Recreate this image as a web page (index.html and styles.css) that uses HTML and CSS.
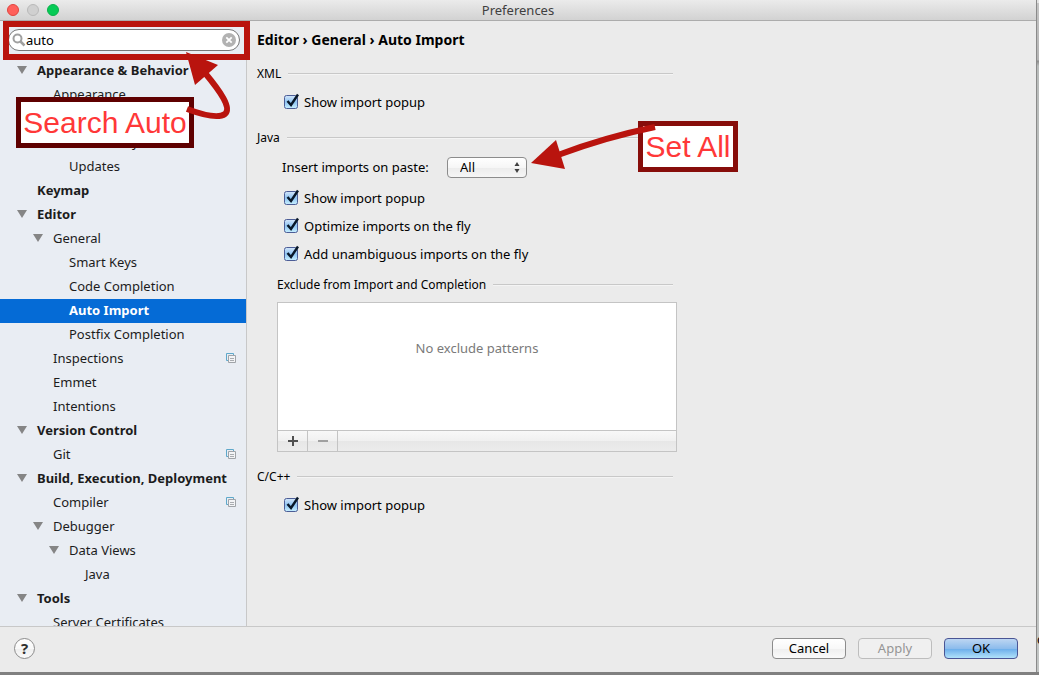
FILE: index.html
```html
<!DOCTYPE html>
<html lang="en">
<head>
  <meta charset="UTF-8" />
  <title>Preferences</title>
  <link rel="stylesheet" href="styles.css">
</head>
<body>
  <svg class="defs" width="0" height="0">
    <symbol id="copy" viewBox="0 0 10 10">
      <path d="M2.500 7.500h-2v-7h7v2" fill="none" stroke="#5fa8ca" />
      <path d="M2.500 2.500h7v7h-7z" fill="#f3f4f6" stroke="#a0a4a8" />
      <path d="M4 5.500h4M4 7.500h4" stroke="#a9acb0" />
    </symbol>
  </svg>

  <div class="window">
    <header class="titlebar">
      <div class="lights">
        <span class="light close"></span>
        <span class="light minimize"></span>
        <span class="light zoom"></span>
      </div>
      <h1>Preferences</h1>
    </header>

    <div class="main">
      <nav class="sidebar">
        <div class="search">
          <svg width="14" height="14" viewBox="0 0 14 14"><circle cx="5.500" cy="5.500" r="4" fill="none" stroke="#a0a0a0" stroke-width="2" /><path d="M8.500 8.500l4 4" stroke="#a0a0a0" stroke-width="2.500" /></svg>
          <input type="text" value="auto" aria-label="Search">
          <button type="button" aria-label="Clear">
            <svg width="14" height="14" viewBox="0 0 14 14"><circle cx="7" cy="7" r="7" fill="#b2b2b2" /><path d="M4.300 4.300l5.400 5.400M9.700 4.300l-5.400 5.400" stroke="#fff" stroke-width="1.800" /></svg>
          </button>
        </div>

        <ul class="tree">
          <li class="open top">Appearance &amp; Behavior</li>
          <li class="level1">Appearance</li>
          <li class="level1 open">System Settings</li>
          <li class="level2">HTTP Proxy</li>
          <li class="level2">Updates</li>
          <li class="top">Keymap</li>
          <li class="open top">Editor</li>
          <li class="level1 open">General</li>
          <li class="level2">Smart Keys</li>
          <li class="level2">Code Completion</li>
          <li class="level2 selected">Auto Import</li>
          <li class="level2">Postfix Completion</li>
          <li class="level1">Inspections <svg class="copy"><use href="#copy" /></svg></li>
          <li class="level1">Emmet</li>
          <li class="level1">Intentions</li>
          <li class="open top">Version Control</li>
          <li class="level1">Git <svg class="copy"><use href="#copy" /></svg></li>
          <li class="open top">Build, Execution, Deployment</li>
          <li class="level1">Compiler <svg class="copy"><use href="#copy" /></svg></li>
          <li class="level1 open">Debugger</li>
          <li class="level2 open">Data Views</li>
          <li class="level3">Java</li>
          <li class="open top">Tools</li>
          <li class="level1">Server Certificates</li>
        </ul>
      </nav>

      <main class="content">
        <h2>Editor › General › Auto Import</h2>

        <section>
          <h3>XML</h3>
          <label class="check"><input type="checkbox" checked> Show import popup</label>
        </section>

        <section>
          <h3>Java</h3>
          <div class="paste">
            <label for="paste">Insert imports on paste:</label>
            <select id="paste">
              <option>All</option>
              <option>Ask</option>
              <option>None</option>
            </select>
          </div>
          <label class="check"><input type="checkbox" checked> Show import popup</label>
          <label class="check"><input type="checkbox" checked> Optimize imports on the fly</label>
          <label class="check"><input type="checkbox" checked> Add unambiguous imports on the fly</label>

          <div class="exclude">
            <h3>Exclude from Import and Completion</h3>
            <div class="list">
              <p>No exclude patterns</p>
              <div class="toolbar">
                <button type="button" aria-label="Add"><svg width="10" height="10"><path d="M0 5h10M5 0v10" stroke="#505050" stroke-width="2" /></svg></button>
                <button type="button" aria-label="Remove" disabled><svg width="10" height="10"><path d="M0 5h10" stroke="#a0a0a0" stroke-width="2" /></svg></button>
              </div>
            </div>
          </div>
        </section>

        <section>
          <h3>C/C++</h3>
          <label class="check"><input type="checkbox" checked> Show import popup</label>
        </section>
      </main>
    </div>

    <footer>
      <button type="button" class="help">?</button>
      <div class="actions">
        <button type="button">Cancel</button>
        <button type="button" disabled>Apply</button>
        <button type="button" class="default">OK</button>
      </div>
    </footer>
  </div>

  <div class="behind"><span>c</span></div>

  <!-- tutorial notes on top of the dialog -->
  <div class="highlight"></div>
  <div class="note note-search">Search Auto</div>
  <div class="note note-set">Set All</div>
  <svg class="arrows" width="760" height="200">
    <path d="M187 109C203 115 218 119 225 114C232 108 220 91 205 73" fill="none" stroke="#b9140e" stroke-width="6" />
    <path d="M186 52L218 65L195 85z" fill="#b9140e" />
    <path d="M655 127Q606 137 558 155" fill="none" stroke="#b9140e" stroke-width="6" />
    <path d="M531 163L556 140L565 169z" fill="#b9140e" />
  </svg>
</body>
</html>
```
FILE: styles.css
```css
*, *::before, *::after {
  box-sizing: border-box;
}

body {
  margin: 0;
  height: 100vh;
  display: flex;
  overflow: hidden;
  padding-bottom: 3px;
  background: #808080;
  font: 13px/18px "Lucida Grande", "Noto Sans", sans-serif;
  color: #000;
}

button, input, select {
  font: inherit;
  color: inherit;
  margin: 0;
  padding: 0;
}

h1, h2, h3, p, ul {
  margin: 0;
  padding: 0;
}

.defs {
  position: absolute;
}

.window {
  flex: 1;
  display: flex;
  flex-direction: column;
  background: #ebebeb;
}

.titlebar {
  display: grid;
  grid-template-columns: 1fr auto 1fr;
  align-items: center;
  height: 21px;
  background: linear-gradient(#ebebeb, #d2d2d2);
  border-bottom: 1px solid #acacac;
}

.titlebar h1 {
  font-size: 13px;
  font-weight: normal;
  color: #404040;
}

.lights {
  display: flex;
  gap: 8px;
  padding-left: 7px;
}

.light {
  width: 12px;
  height: 12px;
  border-radius: 50%;
  border: 1px solid #e0443e;
  background: #ff5f5a;
}

.minimize {
  background: #d0d0d0;
  border-color: #b9b9b9;
}

.zoom {
  background: #06cb56;
  border-color: #0bb04b;
}

.main {
  flex: 1;
  display: flex;
  min-height: 0;
}

/* left tree */
.sidebar {
  width: 247px;
  background: #e9edf3;
  border-right: 1px solid #c8c8c8;
  overflow: hidden;
}

.search {
  display: flex;
  align-items: center;
  height: 22px;
  margin: 8px 6px 8px 8px;
  padding: 0 3px;
  background: #fff;
  border: 1px solid #777;
  border-radius: 11px;
}

.search input {
  flex: 1;
  min-width: 0;
  border: 0;
  outline: 0;
  background: none;
}

.search button {
  display: flex;
  border: 0;
  background: none;
}

.tree {
  list-style: none;
}

.tree li {
  display: flex;
  align-items: center;
  height: 24px;
  padding: 0 10px 2px 37px;
  color: #1c1c1c;
  white-space: nowrap;
}

.tree .top {
  font-weight: bold;
}

.tree .level1 {
  padding-left: 53px;
}

.tree .level2 {
  padding-left: 69px;
}

.tree .level3 {
  padding-left: 85px;
}

.tree .open::before {
  content: "";
  width: 10px;
  margin-left: -20px;
  margin-right: 10px;
  border: 5px solid transparent;
  border-top: 8px solid #858585;
  border-bottom: 0;
}

.tree .selected {
  background: #056bd6;
  color: #fff;
  font-weight: bold;
}

.copy {
  width: 10px;
  height: 10px;
  margin-left: auto;
}

/* settings page */
.content {
  flex: 1;
  padding: 10px;
}

h2 {
  font-size: 14px;
}

.content section {
  max-width: 416px;
  margin-top: 14px;
}

.content h2 + section {
  margin-top: 17px;
}

h3 {
  display: flex;
  align-items: center;
  gap: 7px;
  margin-bottom: 6px;
  font-size: 12px;
  line-height: 16px;
  font-weight: normal;
}

h3::after {
  content: "";
  flex: 1;
  height: 2px;
  background: #c8c8c8;
  border-bottom: 1px solid #f4f4f4;
}

.check {
  display: flex;
  align-items: center;
  gap: 4px;
  height: 28px;
  margin-left: 27px;
}

.check input {
  appearance: none;
  width: 16px;
  height: 18px;
  background: url("data:image/svg+xml,%3Csvg xmlns='http://www.w3.org/2000/svg' width='16' height='18'%3E%3ClinearGradient id='g' x2='0' y2='1'%3E%3Cstop stop-color='%23d4e6fa'/%3E%3Cstop offset='.5' stop-color='%238fc4f2'/%3E%3Cstop offset='1' stop-color='%23c8f0ff'/%3E%3C/linearGradient%3E%3Crect x='.5' y='2.5' width='13' height='13' rx='2' fill='url(%23g)' stroke='%234c5d96'/%3E%3Cpath d='M3.500 8l3.500 4L14 1.500' fill='none' stroke='%23081728' stroke-width='2.400'/%3E%3C/svg%3E") no-repeat;
}

.paste {
  display: flex;
  align-items: center;
  justify-content: space-between;
  width: 245px;
  height: 30px;
  margin: 0 0 2px 25px;
}

.paste select {
  appearance: none;
  width: 80px;
  height: 21px;
  padding: 0 0 1px 12px;
  border: 1px solid #8c8c8c;
  border-radius: 4px;
  background: url("data:image/svg+xml,%3Csvg xmlns='http://www.w3.org/2000/svg' width='6' height='11'%3E%3Cpath d='M3 0L5.500 4H.5zM3 11L.5 7h5z' fill='%23404040'/%3E%3C/svg%3E") no-repeat right 6px center, linear-gradient(#fff, #f6f6f6 50%, #ececec 51%, #f6f6f6);
}

.exclude {
  margin: 9px 0 17px 20px;
}

.exclude h3 {
  margin-bottom: 9px;
}

.list {
  display: flex;
  flex-direction: column;
  height: 150px;
  margin-right: -4px;
  border: 1px solid #c4c4c4;
  background: #fff;
}

.list p {
  flex: 1;
  padding-top: 36px;
  text-align: center;
  color: #7a7a7a;
}

.toolbar {
  display: flex;
  height: 21px;
  border-top: 1px solid #c4c4c4;
  background: linear-gradient(#f8f8f8, #f0f0f0 49%, #e7e7e7 50%, #ececec);
}

.toolbar button {
  display: flex;
  align-items: center;
  justify-content: center;
  width: 30px;
  border: 0;
  border-right: 1px solid #c4c4c4;
  background: none;
}

/* bottom bar */
footer {
  display: flex;
  align-items: center;
  justify-content: space-between;
  height: 46px;
  padding: 0 18px 2px 14px;
  border-top: 1px solid #c8c8c8;
}

footer button {
  width: 74px;
  height: 21px;
  padding-bottom: 2px;
  border: 1px solid #8c8c8c;
  border-radius: 4px;
  background: linear-gradient(#fff, #f8f8f8 50%, #efefef 51%, #fafafa);
}

footer button:disabled {
  color: #959595;
  border-color: #bdbdbd;
  background: #f0f0f0;
}

footer .default {
  border-color: #4a5595;
  background: linear-gradient(#bdd6f2, #8dbcec 50%, #6aacea 51%, #b1e2fa);
}

footer .help {
  width: 21px;
  border-radius: 50%;
  font-size: 15px;
  font-weight: bold;
  color: #303030;
}

.actions {
  display: flex;
  gap: 12px;
}

/* edge of the editor window behind the dialog */
.behind {
  display: flex;
  align-items: flex-end;
  width: 3px;
  padding-bottom: 24px;
  overflow: hidden;
  border-left: 1px solid #8a8a8a;
  background: linear-gradient(#e4e4e4 3px, #c4c4c4 3px, #b4b4b4 60px, #8c8c8c 61px, #b8bbba 66px, #c2c5c4);
}

/* notes */
.highlight, .note, .arrows {
  position: absolute;
}

.highlight {
  top: 21px;
  left: 3px;
  width: 247px;
  height: 39px;
  border: 6px solid #b9140e;
  pointer-events: none;
}

.note {
  border: 5px solid #5f0000;
  background: #fff;
  color: #ff3838;
  font: 30px/41px "Liberation Sans", Arial, sans-serif;
  text-align: center;
}

.note-search {
  top: 97px;
  left: 16px;
  width: 178px;
}

.note-set {
  top: 121px;
  left: 638px;
  width: 100px;
  border-color: #870d0a;
}

.arrows {
  top: 0;
  left: 0;
  pointer-events: none;
}
```
